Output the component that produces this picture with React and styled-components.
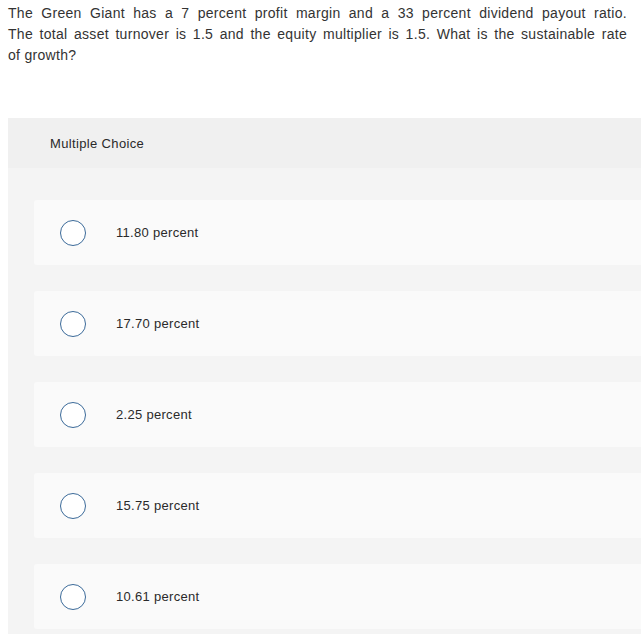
import React from "react";
import styled, { createGlobalStyle } from "styled-components";

const GlobalStyle = createGlobalStyle`
  html, body {
    margin: 0;
    padding: 0;
    background: #fff;
    overflow: hidden;
  }
  body {
    font-family: "Liberation Sans", Arial, sans-serif;
    color: #222;
  }
`;

const Page = styled.div`
  width: 680px;
  padding: 3px 0 0 8px;
`;

const Question = styled.p`
  margin: 0;
  width: 619px;
  font-size: 14px;
  line-height: 21px;
  letter-spacing: 0.3px;
  color: #333;
`;

// the source text is justified; each line is its own row so the breaks match
const Line = styled.span`
  display: block;
  text-align: ${(p) => (p.$justify ? "justify" : "left")};
  text-align-last: ${(p) => (p.$justify ? "justify" : "left")};
`;

const Panel = styled.div`
  margin-top: 52px;
  background: #f4f4f4;
`;

const PanelHeader = styled.div`
  height: 50px;
  display: flex;
  align-items: center;
  padding-left: 42px;
  background: #f0f0f0;
  font-size: 13px;
  letter-spacing: 0.35px;
  color: #2a2a2a;
`;

const Choices = styled.div`
  display: flex;
  flex-direction: column;
  gap: 26px;
  padding: 32px 0 5px 26px;
`;

const Choice = styled.label`
  height: 65px;
  display: flex;
  align-items: center;
  background: #fafafa;
  border-radius: 3px;
  padding-left: 26px;
  cursor: pointer;
`;

const Radio = styled.span`
  width: 24px;
  height: 24px;
  border: 1.5px solid #3b6a99;
  border-radius: 50%;
  background: #fff;
  flex-shrink: 0;
`;

const ChoiceText = styled.span`
  margin-left: 30px;
  font-size: 13px;
  letter-spacing: 0.3px;
  color: #2a2a2a;
`;

const options = [
  "11.80 percent",
  "17.70 percent",
  "2.25 percent",
  "15.75 percent",
  "10.61 percent",
];

export default function App() {
  return (
    <>
      <GlobalStyle />
      <Page>
        <Question>
          <Line $justify>
            The Green Giant has a 7 percent profit margin and a 33 percent
            dividend payout ratio.
          </Line>
          <Line $justify>
            The total asset turnover is 1.5 and the equity multiplier is 1.5.
            What is the sustainable rate
          </Line>
          <Line>of growth?</Line>
        </Question>
        <Panel>
          <PanelHeader>Multiple Choice</PanelHeader>
          <Choices>
            {options.map((o) => (
              <Choice key={o}>
                <Radio />
                <ChoiceText>{o}</ChoiceText>
              </Choice>
            ))}
          </Choices>
        </Panel>
      </Page>
    </>
  );
}
